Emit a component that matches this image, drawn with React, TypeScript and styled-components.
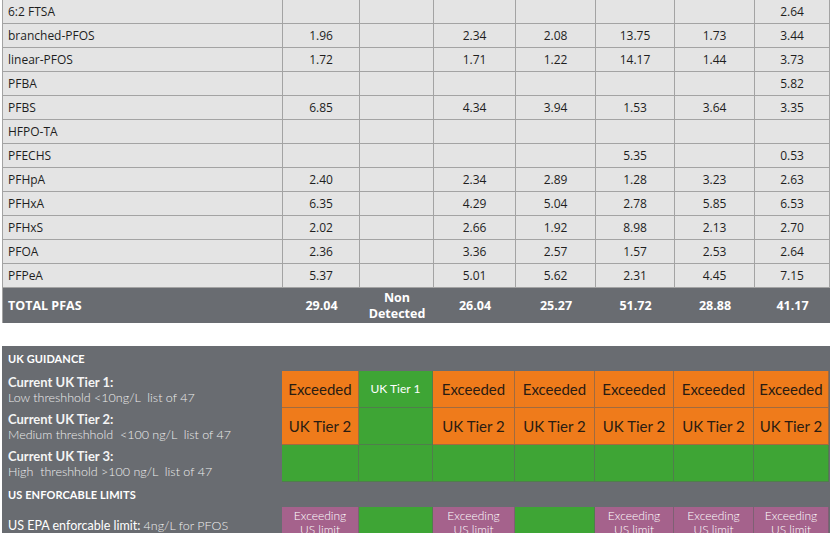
import styled, { createGlobalStyle } from 'styled-components';

const GlobalStyle = createGlobalStyle`
    body {
        margin: 0;
        background: #ffffff;
        font-family: 'Open Sans', 'Liberation Sans', sans-serif;
        overflow: hidden;
    }
`;

const COLUMNS = '280px 77px 74px 82px 80px 79px 80px 75px';

const Page = styled.div`
    width: 828px;
    padding-left: 2px;
`;

const DataTable = styled.div`
    display: grid;
    grid-template-columns: ${COLUMNS};
    border-left: 1px solid #a3a3a3;
    border-top: 1px solid #a3a3a3;
    margin-top: -1px;
`;

const Cell = styled.div<{ $label?: boolean }>`
    height: 24px;
    box-sizing: border-box;
    display: flex;
    align-items: center;
    justify-content: ${(p) => (p.$label ? 'flex-start' : 'center')};
    padding: ${(p) => (p.$label ? '0 0 0 5px' : '0')};
    background: #e4e4e4;
    border-right: 1px solid #a3a3a3;
    border-bottom: 1px solid #a3a3a3;
    font-size: 12px;
    color: #1e1e1e;
`;

const TotalCell = styled.div<{ $label?: boolean }>`
    height: 35px;
    display: flex;
    align-items: center;
    justify-content: ${(p) => (p.$label ? 'flex-start' : 'center')};
    padding: ${(p) => (p.$label ? '0 0 0 5px' : '0')};
    background: #696c71;
    color: #ffffff;
    font-weight: 700;
    font-size: 12.5px;
    line-height: 16px;
    text-align: center;
    white-space: pre;
`;

const Guidance = styled.div`
    margin-top: 23px;
    background: #696c71;
    display: grid;
    grid-template-columns: ${COLUMNS};
    font-family: Lato, 'Open Sans', sans-serif;
    color: #ffffff;
`;

const SectionHeading = styled.div<{ $h: number }>`
    grid-column: 1 / -1;
    height: ${(p) => p.$h}px;
    display: flex;
    align-items: center;
    padding-left: 6px;
    font-size: 11px;
    font-weight: 700;
    letter-spacing: 0.1px;
`;

const RuleLabel = styled.div<{ $h: number }>`
    height: ${(p) => p.$h}px;
    display: flex;
    flex-direction: column;
    justify-content: center;
    padding-left: 6px;
    line-height: 16px;
`;

const RuleTitle = styled.div`
    font-weight: 700;
    font-size: 13px;
    color: #f4f4f4;
`;

const RuleNote = styled.div`
    font-weight: 300;
    font-size: 12.5px;
    color: #ededed;
    white-space: pre;
`;

const EpaText = styled.div`
    font-size: 12.5px;
    color: #ffffff;

    span {
        font-weight: 300;
        color: #eeeeee;
    }
`;

const tone = {
    orange: '#ef7b1b',
    green: '#3ea535',
    mauve: '#a5628c',
};

type Tone = keyof typeof tone;

const Flag = styled.div<{ $tone: Tone; $h: number; $small?: boolean }>`
    height: ${(p) => p.$h}px;
    box-sizing: border-box;
    background: ${(p) => tone[p.$tone]};
    border-right: 1px solid rgba(95, 95, 95, 0.55);
    border-bottom: 1px solid rgba(95, 95, 95, 0.55);
    display: flex;
    align-items: ${(p) => (p.$tone === 'mauve' ? 'flex-start' : 'center')};
    justify-content: center;
    text-align: center;
    white-space: pre;
    padding-top: ${(p) => (p.$tone === 'mauve' ? '2px' : '0')};
    font-size: ${(p) => (p.$small ? '12px' : '15px')};
    line-height: ${(p) => (p.$tone === 'mauve' ? '14px' : '18px')};
    color: ${(p) => (p.$tone === 'orange' ? '#2a1c12' : '#ffffff')};
    font-weight: ${(p) => (p.$tone === 'mauve' ? 300 : 400)};
`;

const rows: string[][] = [
    ['6:2 FTSA', '', '', '', '', '', '', '2.64'],
    ['branched-PFOS', '1.96', '', '2.34', '2.08', '13.75', '1.73', '3.44'],
    ['linear-PFOS', '1.72', '', '1.71', '1.22', '14.17', '1.44', '3.73'],
    ['PFBA', '', '', '', '', '', '', '5.82'],
    ['PFBS', '6.85', '', '4.34', '3.94', '1.53', '3.64', '3.35'],
    ['HFPO-TA', '', '', '', '', '', '', ''],
    ['PFECHS', '', '', '', '', '5.35', '', '0.53'],
    ['PFHpA', '2.40', '', '2.34', '2.89', '1.28', '3.23', '2.63'],
    ['PFHxA', '6.35', '', '4.29', '5.04', '2.78', '5.85', '6.53'],
    ['PFHxS', '2.02', '', '2.66', '1.92', '8.98', '2.13', '2.70'],
    ['PFOA', '2.36', '', '3.36', '2.57', '1.57', '2.53', '2.64'],
    ['PFPeA', '5.37', '', '5.01', '5.62', '2.31', '4.45', '7.15'],
];

const totals = ['29.04', 'Non\nDetected', '26.04', '25.27', '51.72', '28.88', '41.17'];

type Flagged = { tone: Tone; text?: string; small?: boolean };

const O = (text?: string): Flagged => ({ tone: 'orange', text });
const G = (text?: string): Flagged => ({ tone: 'green', text, small: true });
const M: Flagged = { tone: 'mauve', text: 'Exceeding\nUS limit', small: true };

const tiers = [
    {
        title: 'Current UK Tier 1:',
        note: 'Low threshhold <10ng/L  list of 47',
        flags: [O('Exceeded'), G('UK Tier 1'), O('Exceeded'), O('Exceeded'), O('Exceeded'), O('Exceeded'), O('Exceeded')],
    },
    {
        title: 'Current UK Tier 2:',
        note: 'Medium threshhold  <100 ng/L  list of 47',
        flags: [O('UK Tier 2'), G(), O('UK Tier 2'), O('UK Tier 2'), O('UK Tier 2'), O('UK Tier 2'), O('UK Tier 2')],
    },
    {
        title: 'Current UK Tier 3:',
        note: 'High  threshhold >100 ng/L  list of 47',
        flags: [G(), G(), G(), G(), G(), G(), G()],
    },
];

const usFlags: Flagged[] = [M, G(), M, G(), M, M, M];

export default function App() {
    return (
        <Page>
            <GlobalStyle />
            <DataTable>
                {rows.map((row) =>
                    row.map((value, i) => (
                        <Cell key={row[0] + i} $label={i === 0}>
                            {value}
                        </Cell>
                    ))
                )}
                <TotalCell $label>TOTAL PFAS</TotalCell>
                {totals.map((t, i) => (
                    <TotalCell key={i}>{t}</TotalCell>
                ))}
            </DataTable>

            <Guidance>
                <SectionHeading $h={25}>UK GUIDANCE</SectionHeading>
                {tiers.flatMap((tier) => [
                    <RuleLabel key={tier.title} $h={37}>
                        <RuleTitle>{tier.title}</RuleTitle>
                        <RuleNote>{tier.note}</RuleNote>
                    </RuleLabel>,
                    ...tier.flags.map((f, i) => (
                        <Flag key={tier.title + i} $tone={f.tone} $h={37} $small={f.small}>
                            {f.text}
                        </Flag>
                    )),
                ])}
                <SectionHeading $h={25}>US ENFORCABLE LIMITS</SectionHeading>
                <RuleLabel $h={37}>
                    <EpaText>
                        US EPA enforcable limit: <span>4ng/L for PFOS</span>
                    </EpaText>
                </RuleLabel>
                {usFlags.map((f, i) => (
                    <Flag key={'us' + i} $tone={f.tone} $h={37} $small={f.small}>
                        {f.text}
                    </Flag>
                ))}
            </Guidance>
        </Page>
    );
}
